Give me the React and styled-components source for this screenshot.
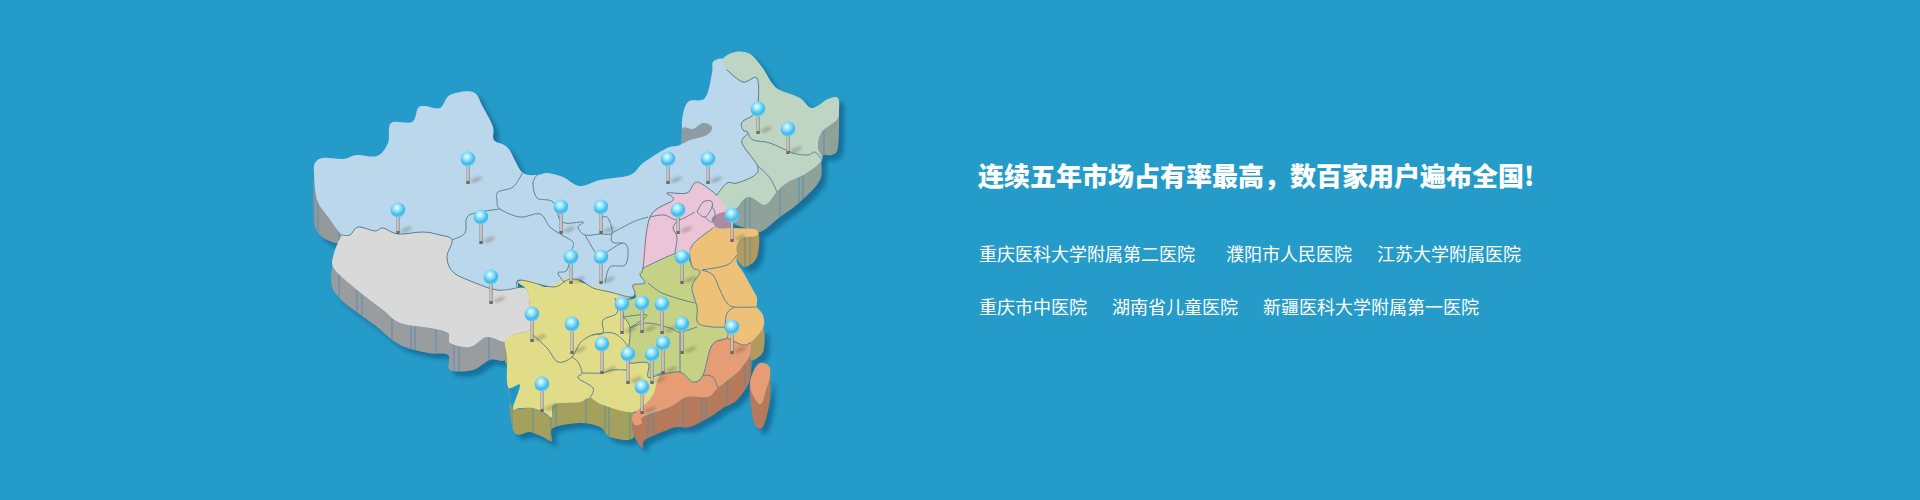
import React from "react";
import styled, { createGlobalStyle } from "styled-components";

const GlobalStyle = createGlobalStyle`
	html, body {
		margin: 0;
		padding: 0;
		background: #259bc9;
	}
`;

// catmull-rom through the points, so the borders don't look like straight cuts
const smooth = (pts, closed = true) => {
	const n = pts.length;
	const at = (i) => (closed ? pts[(i + n) % n] : pts[Math.max(0, Math.min(n - 1, i))]);
	let d = `M${pts[0][0]} ${pts[0][1]}`;
	const last = closed ? n : n - 1;
	for (let i = 0; i < last; i++) {
		const [p0, p1, p2, p3] = [at(i - 1), at(i), at(i + 1), at(i + 2)];
		const c1 = [p1[0] + (p2[0] - p0[0]) / 6, p1[1] + (p2[1] - p0[1]) / 6];
		const c2 = [p2[0] - (p3[0] - p1[0]) / 6, p2[1] - (p3[1] - p1[1]) / 6];
		d += `C${c1[0].toFixed(1)} ${c1[1].toFixed(1)} ${c2[0].toFixed(1)} ${c2[1].toFixed(1)} ${p2[0]} ${p2[1]}`;
	}
	return closed ? d + "Z" : d;
};

const blue = [[314,173],[315,163],[323,158],[343,159],[357,155],[377,156],[388,143],[391,123],[412,122],[418,108],[425,106],[440,108],[450,95],[473,92],[483,107],[493,127],[494,140],[508,148],[522,172],[537,175],[547,173],[563,177],[580,186],[600,180],[630,175],[643,163],[667,148],[682,143],[682,120],[688,102],[705,98],[712,73],[713,62],[723,59],[727,70],[743,82],[757,78],[758,103],[753,115],[742,122],[743,130],[748,133],[742,143],[757,165],[755,175],[737,183],[727,183],[717,195],[697,182],[687,193],[667,193],[673,200],[650,217],[643,268],[640,275],[645,283],[633,285],[635,293],[630,297],[610,292],[593,288],[580,280],[567,280],[553,287],[520,280],[517,288],[497,290],[473,282],[453,272],[447,257],[452,240],[440,235],[423,232],[398,234],[383,228],[375,231],[358,227],[350,235],[342,235],[328,217],[317,200]];
const northeast = [[723,59],[735,52],[750,54],[762,67],[772,83],[780,90],[800,98],[812,108],[828,99],[838,98],[839,110],[837,120],[822,132],[818,147],[822,160],[807,173],[787,183],[777,192],[765,205],[748,197],[735,210],[722,216],[717,195],[727,183],[737,183],[755,175],[757,165],[742,143],[748,133],[743,130],[742,122],[753,115],[758,103],[757,78],[743,82],[727,70]];
const pink = [[697,182],[687,193],[667,193],[673,200],[650,217],[643,268],[677,253],[688,258],[690,250],[695,242],[713,228],[720,224],[727,212],[717,196]];
const tibet = [[342,235],[350,235],[358,227],[375,231],[383,228],[398,234],[423,232],[440,235],[452,240],[447,257],[453,272],[473,282],[497,290],[517,288],[527,290],[530,307],[532,328],[513,335],[505,342],[487,337],[470,347],[450,343],[448,333],[430,328],[400,323],[383,310],[357,290],[335,270],[333,257]];
const yellow = [[518,282],[530,280],[547,287],[570,277],[583,283],[597,287],[610,292],[630,297],[625,302],[623,315],[630,328],[628,357],[630,363],[648,363],[648,377],[660,375],[652,397],[633,412],[603,405],[590,398],[580,402],[565,403],[553,405],[552,417],[545,413],[533,408],[520,408],[513,408],[520,385],[508,387],[507,357],[505,342],[513,335],[532,328],[530,307],[527,290]];
const midGreen = [[642,270],[677,253],[688,258],[693,268],[700,272],[692,287],[697,307],[698,323],[707,323],[725,328],[727,338],[712,345],[705,373],[693,382],[680,372],[675,372],[660,373],[648,377],[648,363],[630,363],[628,357],[630,328],[623,315],[625,302],[635,298],[635,293],[633,285],[645,283],[640,275]];
const orange = [[690,250],[695,242],[713,228],[730,228],[753,229],[758,232],[756,236],[743,238],[737,245],[737,255],[737,263],[743,272],[752,288],[757,298],[757,307],[763,315],[763,328],[750,343],[743,345],[727,338],[725,328],[713,327],[698,323],[697,307],[692,287],[700,272],[693,268]];
const salmon = [[633,415],[652,397],[660,375],[675,372],[680,372],[693,382],[703,375],[712,345],[727,338],[743,345],[750,343],[750,355],[742,367],[737,373],[718,388],[708,397],[687,397],[670,407],[643,417],[642,423],[635,425]];
const taiwan = [[750,387],[753,372],[760,363],[769,366],[770,377],[766,390],[762,403],[757,402]];

const walls = [
	{ pts: [[314,175],[315,227],[335,243],[342,235],[328,217],[317,200]], fill: "#95999c" },
	{ pts: [[333,262],[335,293],[377,327],[400,345],[428,353],[448,355],[450,370],[473,370],[490,360],[505,360],[505,342],[487,337],[470,347],[450,343],[448,333],[430,328],[400,323],[383,310],[357,290],[335,270]], fill: "#999da0" },
	{ pts: [[505,342],[505,360],[508,372],[513,430],[530,432],[543,437],[552,441],[553,428],[580,423],[600,427],[610,437],[633,438],[633,412],[603,405],[590,398],[565,403],[553,405],[552,417],[533,408],[513,408],[508,387],[507,357]], fill: "#a4a05e" },
	{ pts: [[633,415],[633,433],[642,448],[645,440],[667,430],[677,427],[690,427],[710,417],[723,408],[737,400],[750,380],[750,355],[737,373],[718,388],[708,397],[687,397],[670,407],[643,417]], fill: "#b5795c" },
	{ pts: [[750,343],[750,360],[763,352],[763,328]], fill: "#b39a5e" },
	{ pts: [[737,245],[737,258],[745,267],[757,257],[758,232],[743,238]], fill: "#b39a5e" },
	{ pts: [[839,110],[838,147],[832,155],[822,157],[820,180],[800,202],[780,217],[760,232],[745,228],[722,218],[735,210],[748,197],[765,205],[777,192],[787,183],[807,173],[822,160],[818,147],[822,132],[837,120]], fill: "#8fa199" },
	{ pts: [[750,387],[751,407],[755,425],[762,428],[767,415],[770,397],[770,377],[766,390],[762,403],[757,402]], fill: "#b5795c" },
];

const bay = [[683,128],[693,129],[703,123],[712,127],[707,135],[690,140],[682,143]];
const mauve = [[712,218],[727,212],[732,226],[718,228]];

const lands = [
	{ pts: blue, fill: "#bbd7eb" },
	{ pts: northeast, fill: "#bfd5c4" },
	{ pts: pink, fill: "#ebc5d7" },
	{ pts: tibet, fill: "#d9d9d9" },
	{ pts: yellow, fill: "#e0dc88" },
	{ pts: midGreen, fill: "#c5d285" },
	{ pts: orange, fill: "#edc278" },
	{ pts: salmon, fill: "#e69c74" },
	{ pts: taiwan, fill: "#e69c74" },
];

// province borders
const borders = [
	[[727,70],[743,82],[757,78],[758,103],[753,115],[742,122],[743,130],[748,133],[742,143],[757,165],[755,175],[737,183],[727,183],[717,195]],
	[[748,133],[753,140],[770,143],[793,153],[808,155],[815,152],[822,160]],
	[[757,165],[770,178],[777,192]],
	// gansu / qinghai / ningxia / shaanxi / shanxi
	[[523,172],[513,187],[498,192],[497,200],[500,209],[520,217],[540,214],[550,227],[562,235],[573,242],[572,250],[567,270],[558,273],[565,283]],
	[[500,209],[480,212],[467,217],[465,233],[452,240]],
	[[537,175],[533,183],[537,198],[553,202],[562,222],[583,222],[578,227],[585,235],[600,234],[612,233],[608,218],[602,217]],
	[[585,235],[595,252],[600,257],[610,250],[623,243],[628,250],[625,265],[610,267],[605,283]],
	[[612,233],[612,242],[623,243]],
	[[612,233],[633,222],[648,217]],
	[[678,220],[673,228],[677,237],[675,253]],
	[[650,217],[664,215],[678,220],[695,212]],
	[[697,212],[703,202],[711,201],[712,207],[705,217],[697,212]],
	[[712,207],[715,213],[712,222],[705,217]],
	[[702,270],[713,275],[720,290],[727,303],[735,307],[757,307]],
	[[702,270],[727,265],[737,255]],
	[[735,307],[727,313],[725,328]],
	[[648,283],[662,293],[683,300],[695,303]],
	[[623,317],[647,315],[630,328]],
	[[630,328],[647,323],[670,328],[680,332],[697,327]],
	[[680,332],[680,372]],
	[[703,375],[713,377],[718,388]],
	[[533,335],[547,348],[558,362],[572,357],[580,343],[592,335],[603,333],[603,320],[617,313],[615,298]],
	[[572,357],[578,362],[582,373],[578,378],[593,388],[590,398]],
	[[582,373],[602,373],[612,370],[628,370]],
	[[592,335],[613,333],[627,345],[628,357]],
];

const pins = [
	[468,159,184],[758,109,134],[788,129,154],[668,159,184],[708,159,184],
	[398,210,234],[481,217,244],[491,277,304],[532,314,342],[572,324,354],
	[571,257,284],[561,207,234],[601,207,234],[601,257,284],[678,210,234],
	[732,215,242],[682,257,284],[622,304,334],[642,303,333],[662,304,334],
	[682,324,354],[732,327,354],[602,344,374],[628,354,384],[652,354,384],
	[663,343,374],[642,387,414],[542,384,412],
];

function ChinaMap() {
	return (
		<MapArt viewBox="0 0 960 500">
			<defs>
				<filter id="soft" x="-10%" y="-10%" width="120%" height="120%">
					<feGaussianBlur stdDeviation="2.2" />
				</filter>
				<filter id="softer" x="-50%" y="-50%" width="200%" height="200%">
					<feGaussianBlur stdDeviation="1.6" />
				</filter>
				<pattern id="stripes" width="97" height="40" patternUnits="userSpaceOnUse">
					<path d="M4 0v40M23 0v40M27 0v40M48 0v40M66 0v40M71 0v40" stroke="#4a8ba6" strokeWidth="1" opacity="0.8" />
				</pattern>
				<radialGradient id="head" cx="42%" cy="34%" r="68%">
					<stop offset="0" stopColor="#eefcff" />
					<stop offset="0.3" stopColor="#9be8fc" />
					<stop offset="0.75" stopColor="#3fb5ea" />
					<stop offset="1" stopColor="#7bd4f4" />
				</radialGradient>
				<linearGradient id="stick" x1="0" x2="1" y1="0" y2="0">
					<stop offset="0" stopColor="#8d8d90" />
					<stop offset="0.5" stopColor="#e6e0dc" />
					<stop offset="1" stopColor="#77706f" />
				</linearGradient>
			</defs>

			<g transform="translate(5 5)" filter="url(#soft)" fill="#146f9c">
				{walls.map((w, i) => (
					<path key={i} d={smooth(w.pts)} />
				))}
				<path d={smooth(northeast)} />
				<path d={smooth(blue)} />
			</g>

			{walls.map((w, i) => (
				<g key={i}>
					<path d={smooth(w.pts)} fill={w.fill} />
					<path d={smooth(w.pts)} fill="url(#stripes)" />
				</g>
			))}

			{lands.map((l, i) => (
				<path key={i} d={smooth(l.pts)} fill={l.fill} />
			))}
			<path d={smooth(bay)} fill="#8d9ba3" />
			<path d={smooth(mauve)} fill="#a98ba2" />

			<g fill="none" stroke="#5f8295" strokeWidth="1" strokeLinejoin="round">
				{borders.map((b, i) => (
					<path key={i} d={smooth(b, false)} />
				))}
				<path d={smooth([[342,235],[350,235],[358,227],[375,231],[383,228],[398,234],[423,232],[440,235],[452,240],[447,257],[453,272],[473,282],[497,290],[517,288]], false)} />
				<path d={smooth([[517,288],[520,280],[553,287],[567,280],[580,280],[593,288],[610,292],[630,297],[635,293],[633,285],[645,283],[640,275],[643,268],[650,217],[673,200],[667,193],[687,193],[697,182],[717,195]], false)} />
				<path d={smooth([[643,268],[677,253],[688,258],[693,268],[700,272],[692,287],[697,307],[698,323],[713,327],[725,328],[727,338],[712,345],[703,375],[693,382],[680,372],[660,375],[648,377],[648,363],[630,363],[628,357],[630,328],[623,315],[625,302],[630,297]], false)} />
				<path d={smooth([[690,250],[695,242],[713,228]], false)} />
				<path d={smooth([[727,338],[743,345],[750,343]], false)} />
			</g>

			{pins.map(([x, y, base], i) => (
				<g key={i}>
					<path d={`M${x + 1} ${base - 3}L${x + 11} ${base - 8}L${x + 15} ${base - 6}L${x + 7} ${base - 1}Z`} fill="#5a5a48" opacity="0.32" filter="url(#softer)" />
					<rect x={x - 1.5} y={y + 4} width="3" height={base - y - 4} fill="url(#stick)" />
					<rect x={x - 1.5} y={base - 3} width="3" height="3" fill="#6b6764" />
					<circle cx={x} cy={y} r="7.4" fill="url(#head)" />
				</g>
			))}
		</MapArt>
	);
}

function App() {
	return (
		<>
			<GlobalStyle />
			<Section>
				<ChinaMap />
				<Info>
					<Title>连续五年市场占有率最高，数百家用户遍布全国!</Title>
					<Names>
						<Name $gap={31}>重庆医科大学附属第二医院</Name>
						<Name>濮阳市人民医院</Name>
						<Name>江苏大学附属医院</Name>
					</Names>
					<Names>
						<Name>重庆市中医院</Name>
						<Name>湖南省儿童医院</Name>
						<Name>新疆医科大学附属第一医院</Name>
					</Names>
				</Info>
			</Section>
		</>
	);
}

const Section = styled.section`
	display: flex;
	width: 1920px;
	height: 500px;
	overflow: hidden;
	background: #259bc9;
`;

const MapArt = styled.svg`
	display: block;
	flex: none;
	width: 960px;
	height: 500px;
`;

const Info = styled.div`
	padding: 155px 0 0 18px;
	color: #fff;
	font-family: "Noto Sans CJK SC", "Liberation Sans", sans-serif;
`;

const Title = styled.h2`
	margin: 0 0 32px;
	font-size: 26px;
	line-height: 40px;
	font-weight: 900;
	white-space: nowrap;
`;

const Names = styled.div`
	display: flex;
	height: 53px;
	line-height: 53px;
	padding-left: 1px;
`;

const Name = styled.span`
	margin-right: ${({ $gap }) => $gap || 25}px;
	font-size: 18px;
	font-weight: 400;
	white-space: nowrap;
`;

export default App;
